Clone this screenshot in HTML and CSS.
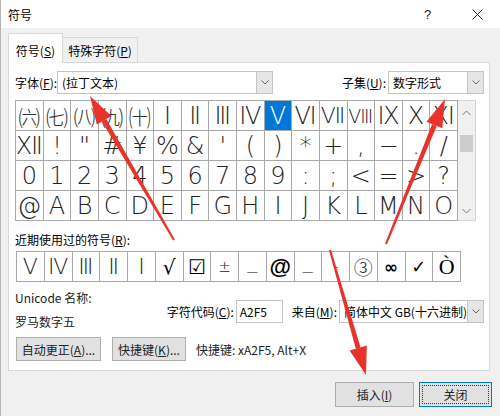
FILE: index.html
```html
<!DOCTYPE html>
<html lang="zh">
<head>
<meta charset="utf-8">
<link rel="stylesheet" href="styles.css">
</head>
<body>
<div class="window">
  <div class="titlebar">
    <span class="title">符号</span>
    <span class="help">?</span>
    <span class="close-x"><svg width="11" height="11" viewBox="0 0 11 11"><path d="M0.5 0.5L10.5 10.5M10.5 0.5L0.5 10.5" stroke="#222" stroke-width="1"/></svg></span>
  </div>
  <div class="body">
    <div class="tabs">
      <div class="tab active">符号(<u>S</u>)</div>
      <div class="tab">特殊字符(<u>P</u>)</div>
    </div>
    <div class="panel">
      <div class="font-row">
        <span class="lbl lbl-font">字体(<u>F</u>):</span>
        <div class="combo font-combo"><span class="combo-text">(拉丁文本)</span><span class="combo-btn"><svg width="8" height="5" viewBox="0 0 8 5"><path d="M0.5 0.5L4 4L7.5 0.5" fill="none" stroke="#666"/></svg></span></div>
        <span class="lbl lbl-subset">子集(<u>U</u>):</span>
        <div class="combo subset-combo"><span class="combo-text">数字形式</span><span class="combo-btn"><svg width="8" height="5" viewBox="0 0 8 5"><path d="M0.5 0.5L4 4L7.5 0.5" fill="none" stroke="#666"/></svg></span></div>
      </div>
      <div class="charmap">
        <div class="cells">
          <span class="cjk">㈥</span><span class="cjk">㈦</span><span class="cjk">㈧</span><span class="cjk">㈨</span><span class="cjk">㈩</span><span>Ⅰ</span><span>Ⅱ</span><span>Ⅲ</span><span>Ⅳ</span><span class="sel">Ⅴ</span><span>Ⅵ</span><span class="narrow">Ⅶ</span><span class="narrower">Ⅷ</span><span>Ⅸ</span><span>Ⅹ</span><span>Ⅺ</span>
          <span>Ⅻ</span><span>!</span><span>"</span><span>#</span><span>¥</span><span>%</span><span>&amp;</span><span>'</span><span>(</span><span>)</span><span>*</span><span>+</span><span>,</span><span>−</span><span>.</span><span>/</span>
          <span>0</span><span>1</span><span>2</span><span>3</span><span>4</span><span>5</span><span>6</span><span>7</span><span>8</span><span>9</span><span>:</span><span>;</span><span>&lt;</span><span>=</span><span>&gt;</span><span>?</span>
          <span>@</span><span>A</span><span>B</span><span>C</span><span>D</span><span>E</span><span>F</span><span>G</span><span>H</span><span>I</span><span>J</span><span>K</span><span>L</span><span>M</span><span>N</span><span>O</span>
        </div>
        <div class="scroll">
          <svg class="sc-up" width="9" height="6" viewBox="0 0 9 6"><path d="M0.5 5L4.5 1L8.5 5" fill="none" stroke="#777"/></svg>
          <div class="thumb"></div>
          <svg class="sc-down" width="9" height="6" viewBox="0 0 9 6"><path d="M0.5 1L4.5 5L8.5 1" fill="none" stroke="#777"/></svg>
        </div>
      </div>
      <div class="recent-lbl">近期使用过的符号(<u>R</u>):</div>
      <div class="recent">
        <span>Ⅴ</span><span>Ⅳ</span><span>Ⅲ</span><span>Ⅱ</span><span>Ⅰ</span><span class="r-serif">√</span><span class="r-box">☑</span><span class="r-small">±</span><span class="r-bar">_</span><span class="r-at">@</span><span class="r-bar">_</span><span class="r-small">-</span><span class="r-circ">③</span><span class="r-inf">∞</span><span class="r-check">✓</span><span class="r-o">Ò</span>
      </div>
      <div class="info">
        <div class="info-left">
          <div class="uname">Unicode 名称:</div>
          <div class="uval">罗马数字五</div>
        </div>
        <div class="info-right">
          <span class="lbl">字符代码(<u>C</u>):</span>
          <div class="input">A2F5</div>
          <span class="lbl lbl-from">来自(<u>M</u>):</span>
          <div class="combo from-combo"><span class="combo-text">简体中文 GB(十六进制)</span><span class="combo-btn"><svg width="8" height="5" viewBox="0 0 8 5"><path d="M0.5 0.5L4 4L7.5 0.5" fill="none" stroke="#666"/></svg></span></div>
        </div>
      </div>
      <div class="btn-row">
        <div class="btn btn-auto">自动更正(<u>A</u>)...</div>
        <div class="btn btn-key">快捷键(<u>K</u>)...</div>
        <span class="shortcut">快捷键: xA2F5, Alt+X</span>
      </div>
    </div>
    <div class="footer">
      <div class="btn btn-insert">插入(<u>I</u>)</div>
      <div class="btn btn-close"><span class="focus">关闭</span></div>
    </div>
  </div>
  <svg class="arrows" width="500" height="416" viewBox="0 0 500 416">
    <g fill="#e8332a">
      <polygon points="174.9,239.5 173.1,240.5 101.9,121.5 106.3,118.9"/>
      <polygon points="90,96 111.4,115.9 96.8,124.5"/>
      <polygon points="386.9,244.4 385.1,243.6 432.1,124.1 436.7,125.9"/>
      <polygon points="445,99 442.3,128.2 426.5,121.8"/>
      <polygon points="331,249.7 329,250.3 355.8,348.8 360.6,347.4"/>
      <polygon points="366,375 366.8,345.6 349.6,350.6"/>
    </g>
  </svg>
</div>
</body>
</html>
```
FILE: styles.css
```css
* { box-sizing: border-box; }
html, body { margin: 0; padding: 0; }
body {
  width: 500px;
  height: 416px;
  overflow: hidden;
  background: #f0f0f0;
  font-family: "Noto Sans CJK SC", "Microsoft YaHei", sans-serif;
  font-size: 12px;
  color: #000;
}
u { text-decoration: underline; text-underline-offset: 1px; }
.window {
  position: relative;
  width: 500px;
  height: 416px;
  border-left: 1px solid #b5b5b5;
  display: flex;
  flex-direction: column;
}
.titlebar {
  height: 28px;
  background: #fff;
  display: flex;
  align-items: center;
  padding-left: 7px;
}
.title { font-size: 12px; flex: 1; }
.help { font-size: 13px; width: 12px; margin-right: 36px; color: #222; font-family: "Liberation Sans", sans-serif; }
.close-x { width: 11px; height: 11px; margin-right: 17px; display: flex; }
.body {
  flex: 1;
  padding: 5px 10px 0 7px;
}
.tabs {
  display: flex;
  align-items: flex-end;
  height: 29px;
}
.tab {
  height: 25px;
  width: 75px;
  border: 1px solid #d9d9d9;
  border-left: none;
  border-bottom: none;
  background: #f0f0f0;
  display: flex;
  align-items: center;
  justify-content: center;
  white-space: nowrap;
  padding-top: 1px;
}
.tab.active {
  width: 55px;
  height: 30px;
  border-left: 1px solid #d9d9d9;
  background: #fff;
  margin-bottom: -1px;
  position: relative;
  z-index: 1;
  padding-top: 4px;
}
.panel {
  background: #fff;
  border: 1px solid #d9d9d9;
  height: 309px;
  padding: 8px 5px 0 6px;
}
.font-row {
  display: flex;
  align-items: center;
  height: 23px;
}
.lbl { white-space: nowrap; }
.lbl-font { width: 42px; }
.lbl-subset { margin-left: auto; margin-right: 2px; }
.combo {
  height: 23px;
  border: 1px solid #c4c4c4;
  background: #fff;
  display: flex;
  align-items: stretch;
}
.combo-text { flex: 1; padding-left: 4px; display: flex; align-items: center; white-space: nowrap; overflow: hidden; }
.combo-btn {
  width: 16px;
  background: #e6e6e6;
  border-left: 1px solid #c4c4c4;
  display: flex;
  align-items: center;
  justify-content: center;
}
.font-combo { width: 216px; }
.subset-combo { width: 96px; }
.charmap {
  display: flex;
  margin-top: 6px;
  height: 121px;
  width: 461px;
}
.cells {
  width: 443px;
  display: grid;
  grid-template-columns: repeat(16, 1fr);
  grid-auto-rows: 30px;
  border-top: 1px solid #a8a8a8;
  border-left: 1px solid #a8a8a8;
  font-family: "DejaVu Sans ExtraLight", "DejaVu Sans", "Noto Sans CJK SC", sans-serif;
  font-weight: 200;
  font-size: 24px;
  color: #222;
}
.cells span {
  border-right: 1px solid #a8a8a8;
  border-bottom: 1px solid #a8a8a8;
  display: flex;
  align-items: center;
  justify-content: center;
  overflow: hidden;
  line-height: 28px;
}
.cells span.cjk { font-family: "Noto Sans CJK SC", sans-serif; font-weight: 300; font-size: 22px; color: #333; }
.cells span.narrow { font-size: 22px; }
.cells span.narrower { font-size: 19px; }
.cells span.sel { background: #0078d7; color: #fff; }
.scroll {
  width: 18px;
  background: #f0f0f0;
  border: 1px solid #d4d4d4;
  border-left: none;
  display: flex;
  flex-direction: column;
  align-items: center;
  padding-top: 9px;
}
.thumb {
  width: 13px;
  height: 17px;
  background: #cdcdcd;
  margin-top: 19px;
}
.sc-down { margin-top: auto; margin-bottom: 6px; }
.recent-lbl {
  margin-top: 11px;
  height: 16px;
  line-height: 16px;
}
.recent {
  margin-top: 3px;
  margin-left: 1px;
  width: 445px;
  height: 31px;
  display: grid;
  grid-template-columns: repeat(16, 1fr);
  border-top: 1px solid #a8a8a8;
  border-left: 1px solid #a8a8a8;
  font-family: "DejaVu Sans ExtraLight", "DejaVu Sans", "Noto Sans CJK SC", sans-serif;
  font-weight: 200;
  font-size: 22px;
  color: #222;
}
.recent span {
  border-right: 1px solid #a8a8a8;
  border-bottom: 1px solid #a8a8a8;
  display: flex;
  align-items: center;
  justify-content: center;
  overflow: hidden;
  line-height: 28px;
}
.recent .r-serif { font-family: "DejaVu Serif", serif; font-size: 20px; font-weight: 400; color: #000; }
.recent .r-box { font-family: "DejaVu Sans", sans-serif; font-size: 20px; font-weight: 700; color: #000; }
.recent .r-small { font-size: 15px; }
.recent .r-bar { font-family: "Liberation Sans", sans-serif; font-weight: 700; font-size: 18px; color: #000; align-items: flex-end; padding-bottom: 2px; }
.recent .r-at { font-family: "Liberation Sans", sans-serif; font-weight: 700; font-size: 22px; color: #000; }
.recent .r-circ { font-family: "Noto Sans CJK SC", sans-serif; font-weight: 300; font-size: 19px; }
.recent .r-inf { font-family: "DejaVu Sans", sans-serif; font-weight: 700; font-size: 17px; color: #000; }
.recent .r-check { font-family: "DejaVu Sans", sans-serif; font-weight: 700; font-size: 18px; color: #000; }
.recent .r-o { font-family: "Liberation Serif", serif; font-size: 22px; font-weight: 400; color: #000; }
.info {
  display: flex;
  margin-top: 8px;
  height: 40px;
}
.info-left { width: 155px; }
.uname { height: 16px; line-height: 16px; color: #222; }
.uval { height: 16px; line-height: 16px; margin-top: 8px; color: #222; }
.info-right {
  display: flex;
  align-items: center;
  height: 23px;
  margin-top: 10px;
}
.input {
  width: 47px;
  height: 23px;
  border: 1px solid #c4c4c4;
  margin-left: 2px;
  padding-left: 3px;
  display: flex;
  align-items: center;
}
.lbl-from { margin-left: 9px; margin-right: 2px; }
.from-combo { width: 145px; }
.btn-row {
  display: flex;
  align-items: center;
  margin-top: 7px;
  height: 24px;
  padding-left: 1px;
}
.btn {
  height: 24px;
  background: #e1e1e1;
  border: 1px solid #adadad;
  display: flex;
  align-items: center;
  justify-content: center;
  white-space: nowrap;
  color: #222;
}
.btn-auto { width: 85px; }
.btn-key { width: 74px; margin-left: 11px; }
.shortcut { margin-left: 10px; color: #222; }
.footer {
  display: flex;
  justify-content: flex-end;
  margin-top: 11px;
  margin-right: -2px;
  gap: 5px;
}
.btn-insert { width: 79px; height: 25px; }
.btn-close { width: 73px; height: 25px; border: 1px solid #0078d7; padding: 2px; }
.focus {
  width: 100%;
  height: 100%;
  border: 1px dotted #333;
  display: flex;
  align-items: center;
  justify-content: center;
}
.arrows {
  position: absolute;
  left: -1px;
  top: 0;
  pointer-events: none;
}
```
